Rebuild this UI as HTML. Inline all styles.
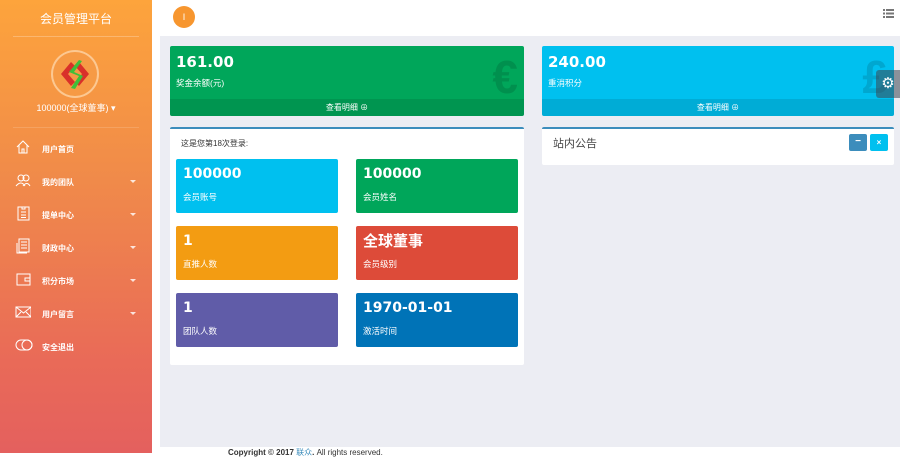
<!DOCTYPE html>
<html><head><meta charset="utf-8"><style>
*{margin:0;padding:0;box-sizing:border-box}
body{width:900px;height:459px;overflow:hidden;background:#fff;font-family:"Liberation Sans","Noto Sans CJK SC",sans-serif;position:relative}
.side{position:absolute;left:0;top:0;width:152px;height:453px;background:linear-gradient(#fda43c,#f08a4a 40%,#e96a58 80%,#e4605e)}
.side .title{color:#fff;font-size:12px;text-align:center;padding-top:10px;height:37px;border-bottom:1px solid rgba(255,255,255,.25);margin:0 13px}
.avatar{position:absolute;left:51px;top:50px;width:48px;height:48px;border-radius:50%;border:2px solid rgba(255,220,180,.7);background:#f69a45}
.uname{position:absolute;left:0;width:152px;top:101px;text-align:center;color:#fff;font-size:9px}
.hr2{position:absolute;left:13px;width:126px;top:127px;border-top:1px solid rgba(255,255,255,.15)}
.mi{position:absolute;left:0;width:152px;height:14px;color:#fff;font-size:8px;font-weight:bold}
.mi svg{position:absolute;left:15px;top:-3px}
.mi span{position:absolute;left:42px;top:2px}
.mi i{position:absolute;left:130px;top:5px;border:3px solid transparent;border-top-color:rgba(255,255,255,.8);border-bottom:0}
.top{position:absolute;left:152px;top:0;width:748px;height:36px;background:#fff}
.circ{position:absolute;left:173px;top:6px;width:22px;height:22px;border-radius:50%;background:#f7962f;color:#fff;font-size:9px;text-align:center;line-height:22px}
.content{position:absolute;left:160px;top:36px;width:740px;height:411px;background:#ecedf3}
.bottom{position:absolute;left:152px;top:447px;width:748px;height:12px;background:#fff;font-size:8px;color:#333}
.card{position:absolute;color:#fff;overflow:hidden;border-radius:2px}
.card b{position:absolute;left:6px;top:7px;font-size:15px;font-family:"DejaVu Sans",sans-serif}
.card .lb{position:absolute;left:6px;top:31px;font-size:8.5px}
.card .ft{position:absolute;left:0;bottom:0;width:100%;height:17px;background:rgba(0,0,0,.1);text-align:center;font-size:8px;line-height:17px}
.card .ic{position:absolute;right:6px;top:8px;font-size:46px;color:rgba(0,0,0,.13);font-weight:bold;line-height:46px}
.panel{position:absolute;background:#fff;border-top:2px solid #3c8dbc;border-radius:2px}
.t{position:absolute;color:#fff;border-radius:2px;width:162px;height:54px}
.t b{position:absolute;left:7px;top:7px;font-size:14px;font-family:"DejaVu Sans",sans-serif}
.t span{position:absolute;left:7px;top:32px;font-size:8.5px}
</style></head><body>
<div class="side">
<div class="title">会员管理平台</div>
<div class="avatar"><svg width="44" height="44" viewBox="0 0 44 44"><path d="M18 10 L8 22 L18 34 L22 30 L15 22 L22 14Z" fill="#d9302a"/><path d="M26 10 L36 22 L26 34 L22 30 L29 22 L22 14Z" fill="#d9302a"/><path d="M26 8 L16 20 L26 24 L18 36 L22 37 L30 24 L21 20 L29 9Z" fill="#3fbf3a"/></svg></div>
<div class="uname">100000(全球董事) ▾</div>
<div class="hr2"></div>
<div class="mi" style="top:142px"><svg width="16" height="16" fill="none" stroke="#fff" stroke-width="1"><path d="M2 8 L8 2 L14 8 M4 6 V14 H12 V6 M7 14 V10 H9 V14"/></svg><span>用户首页</span></div>
<div class="mi" style="top:175px"><svg width="16" height="16" fill="none" stroke="#fff" stroke-width="1"><circle cx="6" cy="6" r="3"/><circle cx="11" cy="6" r="3"/><path d="M1 14 Q6 8 10 14 M8 14 Q12 9 15 14"/></svg><span>我的团队</span><i></i></div>
<div class="mi" style="top:208px"><svg width="16" height="16" fill="none" stroke="#fff" stroke-width="1"><rect x="3" y="2" width="11" height="13"/><path d="M6 7 H11 M6 10 H11 M6 12.5 H11 M7 2 V4 H10 V2"/></svg><span>提单中心</span><i></i></div>
<div class="mi" style="top:241px"><svg width="16" height="16" fill="none" stroke="#fff" stroke-width="1"><rect x="4" y="1" width="10" height="13"/><path d="M2 5 V15 H12 M6 4 H12 M6 7 H12 M6 10 H12"/></svg><span>财政中心</span><i></i></div>
<div class="mi" style="top:274px"><svg width="16" height="16" fill="none" stroke="#fff" stroke-width="1"><rect x="2" y="3" width="13" height="11"/><path d="M10 7 H15 V10 H10Z"/></svg><span>积分市场</span><i></i></div>
<div class="mi" style="top:307px"><svg width="16" height="16" fill="none" stroke="#fff" stroke-width="1"><rect x="1" y="3" width="15" height="10"/><path d="M1 3 L8.5 9 L16 3 M1 13 L6 8 M16 13 L11 8"/></svg><span>用户留言</span><i></i></div>
<div class="mi" style="top:340px"><svg width="18" height="16" fill="none" stroke="#fff" stroke-width="1"><rect x="1" y="3" width="16" height="10" rx="5"/><circle cx="12" cy="8" r="5"/></svg><span>安全退出</span></div>
</div>
<div class="top"></div>
<div class="circ">I</div>
<svg style="position:absolute;left:883px;top:9px" width="11" height="9" fill="#777"><rect x="0" y="0" width="2" height="2"/><rect x="3" y="0" width="8" height="2"/><rect x="0" y="3.5" width="2" height="2"/><rect x="3" y="3.5" width="8" height="2"/><rect x="0" y="7" width="2" height="2"/><rect x="3" y="7" width="8" height="2"/></svg>
<div class="content"></div>
<div class="card" style="left:170px;top:46px;width:354px;height:70px;background:#00a65a"><b>161.00</b><div class="lb">奖金余额(元)</div><div class="ic">€</div><div class="ft">查看明细 ⊕</div></div>
<div class="card" style="left:542px;top:46px;width:352px;height:70px;background:#00c0ef"><b>240.00</b><div class="lb">重消积分</div><div class="ic">£</div><div class="ft">查看明细 ⊕</div></div>
<div style="position:absolute;left:876px;top:70px;width:24px;height:28px;background:rgba(60,70,80,.55);border-radius:3px 0 0 3px;color:#fff;font-size:15px;text-align:center;line-height:28px">⚙</div>
<div class="panel" style="left:170px;top:127px;width:354px;height:238px">
<div style="position:absolute;left:11px;top:9px;font-size:8px;color:#333">这是您第18次登录:</div>
</div>
<div class="t" style="left:176px;top:159px;background:#00c0ef"><b>100000</b><span>会员账号</span></div>
<div class="t" style="left:356px;top:159px;background:#00a65a"><b>100000</b><span>会员姓名</span></div>
<div class="t" style="left:176px;top:226px;background:#f39c12"><b>1</b><span>直推人数</span></div>
<div class="t" style="left:356px;top:226px;background:#dd4b39"><b style="font-family:'Noto Sans CJK SC',sans-serif;top:4px;font-size:15px">全球董事</b><span>会员级别</span></div>
<div class="t" style="left:176px;top:293px;background:#605ca8"><b>1</b><span>团队人数</span></div>
<div class="t" style="left:356px;top:293px;background:#0073b7"><b>1970-01-01</b><span>激活时间</span></div>
<div class="panel" style="left:542px;top:127px;width:352px;height:38px">
<div style="position:absolute;left:11px;top:6px;font-size:11px;color:#444">站内公告</div>
<div style="position:absolute;left:307px;top:5px;width:18px;height:17px;background:#3c8dbc;border-radius:2px;color:#fff;font-size:10px;text-align:center;line-height:16px;font-weight:bold">−</div>
<div style="position:absolute;left:328px;top:5px;width:18px;height:17px;background:#00c0ef;border-radius:2px;color:#fff;font-size:8px;text-align:center;line-height:17px;font-weight:bold">×</div>
</div>
<div class="bottom"><span style="position:absolute;left:76px;top:0;font-weight:bold">Copyright © 2017 <span style="color:#3c8dbc;font-weight:normal">联众</span>.<span style="font-weight:normal"> All rights reserved.</span></span></div>
</body></html>
